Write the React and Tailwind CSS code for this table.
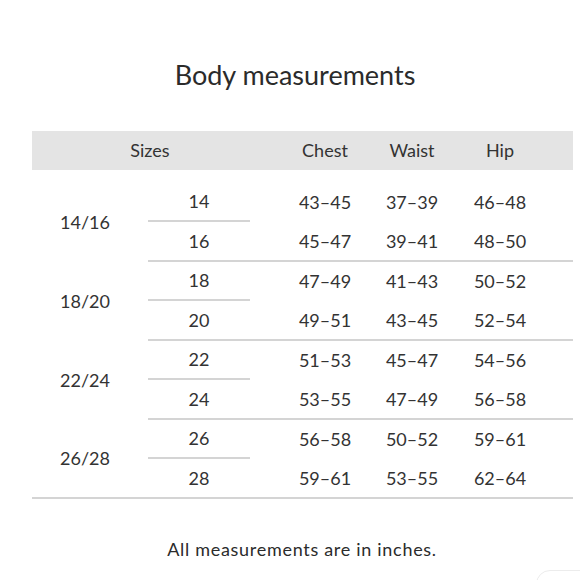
import React from 'react';

const groups = [
  {
    label: '14/16',
    rows: [
      { size: '14', chest: '43–45', waist: '37–39', hip: '46–48' },
      { size: '16', chest: '45–47', waist: '39–41', hip: '48–50' },
    ],
  },
  {
    label: '18/20',
    rows: [
      { size: '18', chest: '47–49', waist: '41–43', hip: '50–52' },
      { size: '20', chest: '49–51', waist: '43–45', hip: '52–54' },
    ],
  },
  {
    label: '22/24',
    rows: [
      { size: '22', chest: '51–53', waist: '45–47', hip: '54–56' },
      { size: '24', chest: '53–55', waist: '47–49', hip: '56–58' },
    ],
  },
  {
    label: '26/28',
    rows: [
      { size: '26', chest: '56–58', waist: '50–52', hip: '59–61' },
      { size: '28', chest: '59–61', waist: '53–55', hip: '62–64' },
    ],
  },
];

const SizeChart = () => {
  return (
    <div
      className="relative w-[580px] h-[580px] bg-white text-[#333] overflow-hidden"
      style={{ fontFamily: 'Lato, "Open Sans", sans-serif' }}
    >
      {/* Title */}
      <h1 className="pt-[59px] text-center text-[27px] leading-[32px] text-[#2b2b2b] pl-[10px]">
        Body measurements
      </h1>

      {/* Table */}
      <div className="ml-[32px] w-[541px] mt-[40px]">
        {/* Header row */}
        <div className="flex items-center h-[39px] bg-[#e4e4e4] text-[18px]">
          <div className="w-[236px] text-center">Sizes</div>
          <div className="w-[12px]" />
          <div className="w-[90px] text-center">Chest</div>
          <div className="w-[84px] text-center">Waist</div>
          <div className="w-[92px] text-center">Hip</div>
        </div>

        {/* Body */}
        <div className="pt-[13px] border-b-2 border-[#d4d4d4]">
          {groups.map((group, gi) => (
            <div key={group.label} className="flex">
              <div className="w-[116px] flex items-center pl-[28px] text-[18px]">
                {group.label}
              </div>
              <div
                className={
                  gi < groups.length - 1
                    ? 'flex-1 flex flex-col border-b-2 border-[#d4d4d4]'
                    : 'flex-1 flex flex-col'
                }
              >
                {group.rows.map((row, ri) => (
                  <div
                    key={row.size}
                    className={ri === 0 ? 'flex h-[39px] text-[18px]' : 'flex h-[38px] text-[18px]'}
                  >
                    <div
                      className={
                        ri === 0
                          ? 'w-[102px] flex items-center justify-center border-b-2 border-[#d4d4d4]'
                          : 'w-[102px] flex items-center justify-center'
                      }
                    >
                      {row.size}
                    </div>
                    <div className="w-[30px]" />
                    <div className="w-[90px] flex items-center justify-center">{row.chest}</div>
                    <div className="w-[84px] flex items-center justify-center">{row.waist}</div>
                    <div className="w-[92px] flex items-center justify-center">{row.hip}</div>
                  </div>
                ))}
              </div>
            </div>
          ))}
        </div>
      </div>

      {/* Footnote */}
      <p className="mt-[38px] text-center text-[18px] leading-[24px] tracking-[0.7px] text-[#2b2b2b] pl-[24px]">
        All measurements are in inches.
      </p>

      {/* Faint corner widget */}
      <div className="absolute right-[-20px] bottom-[-30px] w-[64px] h-[40px] rounded-[14px] border border-[#ececec]" />
    </div>
  );
};

export default function App() {
  return <SizeChart />;
}
